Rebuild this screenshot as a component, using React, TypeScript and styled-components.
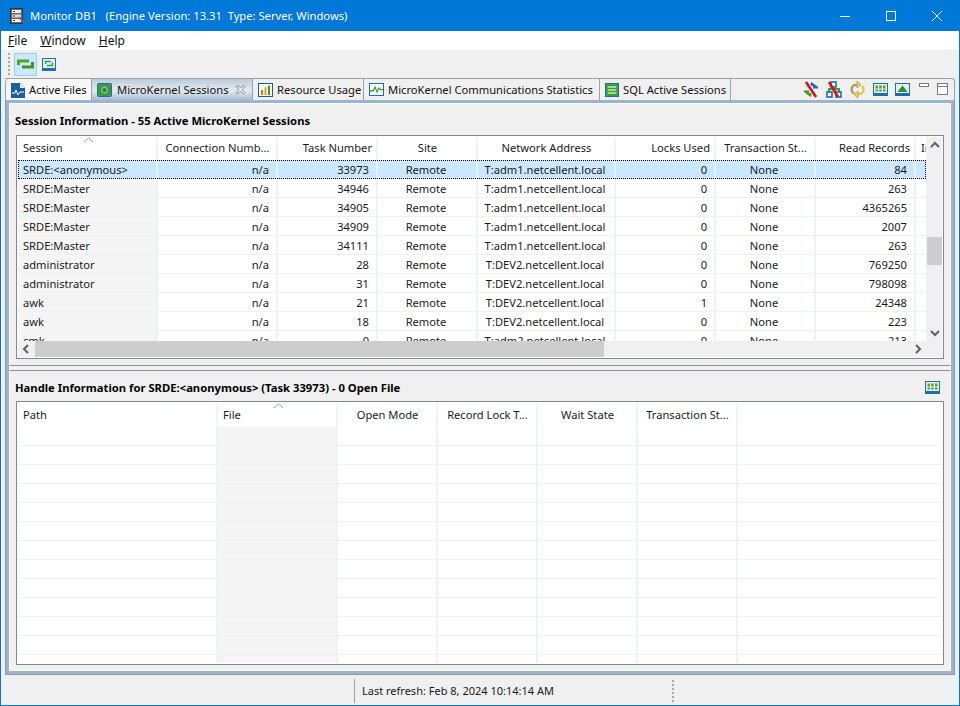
import React from "react";
import styled, { createGlobalStyle } from "styled-components";

const GlobalStyle = createGlobalStyle`
  html, body {
    margin: 0;
    padding: 0;
    background: #f0f0f0;
  }
  * {
    box-sizing: border-box;
  }
  svg {
    flex: none;
  }
`;

const Window = styled.div`
  width: 960px;
  height: 706px;
  display: flex;
  flex-direction: column;
  overflow: hidden;
  background: #f0f0f0;
  border: 1px solid #0078d7;
  border-top: none;
  font-family: "Noto Sans", "Open Sans", sans-serif;
  font-size: 11.15px;
  color: #111;
`;

const TitleBar = styled.div`
  height: 31px;
  margin: 0 -1px;
  flex: none;
  display: flex;
  align-items: center;
  padding-left: 9px;
  background: #0078d7;
  color: #fff;
  font-size: 11.2px;
`;

const TitleText = styled.span`
  margin-left: 5px;
  flex: 1;
  white-space: pre;
`;

const WindowButton = styled.div`
  width: 46px;
  height: 31px;
  display: flex;
  align-items: center;
  justify-content: center;
`;

const MenuBar = styled.div`
  height: 19px;
  flex: none;
  display: flex;
  align-items: center;
  gap: 13px;
  padding-left: 7px;
  background: #fff;
  font-size: 12px;
`;

const MenuItem = styled.span`
  &::first-letter {
    text-decoration: underline;
  }
`;

const ToolBar = styled.div`
  height: 28px;
  flex: none;
  display: flex;
  align-items: center;
  padding-left: 7px;
`;

const Grip = styled.div<{ $height: number }>`
  width: 2px;
  height: ${({ $height }) => $height}px;
  border-left: 2px dotted #a8a8a8;
`;

const ToolButton = styled.div<{ $active?: boolean }>`
  width: 23px;
  height: 23px;
  display: flex;
  align-items: center;
  justify-content: center;
  margin-left: ${({ $active }) => ($active ? "4px" : "0")};
  background: ${({ $active }) => ($active ? "#cce8ff" : "transparent")};
  border: 1px solid ${({ $active }) => ($active ? "#99d1ff" : "transparent")};
`;

const Folder = styled.div`
  width: 950px;
  height: 597px;
  flex: none;
  margin-left: 4px;
  display: flex;
  flex-direction: column;
`;

const TabStrip = styled.div`
  height: 22px;
  flex: none;
  display: flex;
  align-items: stretch;
  font-size: 11.2px;
  border-top: 1px solid #a0a0a0;
  border-right: 1px solid #a0a0a0;
  border-top-right-radius: 4px;
`;

const Tab = styled.div<{ $width: number; $state: "first" | "selected" | "normal" }>`
  width: ${({ $width }) => $width}px;
  flex: none;
  display: flex;
  align-items: center;
  gap: ${({ $state }) => ($state === "selected" ? 5 : 4)}px;
  padding-left: 5px;
  white-space: nowrap;
  border-right: 1px solid #a0a0a0;
  border-left: ${({ $state }) => ($state === "first" ? "1px solid #a0a0a0" : "none")};
  border-top-left-radius: ${({ $state }) => ($state === "first" ? "4px" : "0")};
  background: ${({ $state }) =>
    $state === "selected"
      ? "linear-gradient(#b9cbdc, #dfe6ed 45%, #dfe6ed 60%, #a6bcd2)"
      : $state === "first"
        ? "#f7f7f7"
        : "#f0f0f0"};
`;

const TabClose = styled.span`
  display: flex;
  margin-left: auto;
  margin-right: 6px;
`;

const TabTools = styled.div`
  flex: 1;
  display: flex;
  align-items: center;
  justify-content: flex-end;
  gap: 7px;
  padding-right: 6px;
`;

const ViewTools = styled.div`
  display: flex;
  align-items: center;
  gap: 7px;
  margin-left: 2px;
`;

const TabBody = styled.div`
  flex: 1;
  display: flex;
  flex-direction: column;
  border: 1px solid #8f9aa6;
  border-top: none;
  box-shadow: inset 0 0 0 3px #9cb3cc;
  padding: 3px;
`;

const Panel = styled.section<{ $height: number; $top?: boolean }>`
  height: ${({ $height }) => $height}px;
  flex: none;
  display: flex;
  flex-direction: column;
  padding: 0 6px;
  background: #f0f0f0;
  border: 1px solid #fff;
  border-top: ${({ $top }) => ($top ? "1px solid #fff" : "1px solid #8c9097")};
  border-bottom: ${({ $top }) => ($top ? "1px solid #8c9097" : "1px solid #fff")};
`;

const Sash = styled.div`
  height: 4px;
  flex: none;
  background: #f0f0f0;
`;

const PanelHead = styled.div<{ $height: number }>`
  height: ${({ $height }) => $height}px;
  flex: none;
  display: flex;
  align-items: center;
  justify-content: space-between;
  padding: 2px 4px 0 0;
`;

const PanelTitle = styled.h2`
  margin: 0 0 0 -1px;
  font-size: 11.25px;
  font-weight: 700;
  color: #000;
`;

const TableFrame = styled.div<{ $height: number }>`
  height: ${({ $height }) => $height}px;
  flex: none;
  padding: 1px;
  background: #fff;
  border: 1px solid #828790;
  display: grid;
  grid-template-columns: minmax(0, 1fr) auto;
  grid-template-rows: minmax(0, 1fr) auto;
`;

const TableView = styled.div`
  overflow: hidden;
  position: relative;
`;

const HeaderRow = styled.div<{ $cols: string; $height: number }>`
  height: ${({ $height }) => $height}px;
  display: grid;
  grid-template-columns: ${({ $cols }) => $cols};
  background: #fff;
`;

const HeaderCell = styled.div<{ $align: string }>`
  display: flex;
  align-items: center;
  padding: 0 4px 2px 5px;
  justify-content: ${({ $align }) => $align};
  white-space: nowrap;
  overflow: hidden;
  border-right: 2px solid #f0f3f8;
  color: #1a1a1a;
`;

const SortMark = styled.svg<{ $left: number }>`
  position: absolute;
  top: 0;
  left: ${({ $left }) => $left}px;
`;

const Row = styled.div<{ $cols: string; $selected?: boolean }>`
  height: 19px;
  display: grid;
  grid-template-columns: ${({ $cols }) => $cols};
  border-bottom: 1px solid #f0f0f0;
  outline: ${({ $selected }) => ($selected ? "1px dotted #000" : "none")};
  outline-offset: -1px;
  background: ${({ $selected }) => ($selected ? "#cce8ff" : "transparent")};
`;

const Cell = styled.div<{ $align: string; $sorted?: boolean; $selected?: boolean }>`
  display: flex;
  align-items: center;
  justify-content: ${({ $align }) => $align};
  padding: 1px 7px 0 5px;
  white-space: nowrap;
  overflow: hidden;
  color: #1a1a1a;
  border-right: 2px solid ${({ $selected }) => ($selected ? "#e4f2fd" : "#eef2f9")};
  background: ${({ $sorted, $selected }) =>
    $selected ? "transparent" : $sorted ? "#f5f5f5" : "transparent"};
`;

const VScroll = styled.div`
  width: 16px;
  display: flex;
  flex-direction: column;
  align-items: center;
  background: #f0f0f0;
  border-left: 1px solid #f0f0f0;
`;

const VThumb = styled.div`
  width: 15px;
  height: 28px;
  margin-top: 84px;
  background: #cdcdcd;
`;

const ScrollSpacer = styled.div`
  flex: 1;
`;

const ArrowBox = styled.div`
  width: 16px;
  height: 16px;
  flex: none;
  display: flex;
  align-items: center;
  justify-content: center;
`;

const HScroll = styled.div`
  height: 16px;
  display: flex;
  background: #f0f0f0;
`;

const HThumb = styled.div`
  width: 569px;
  margin-left: 1px;
  background: #cdcdcd;
`;

const HTrack = styled.div`
  flex: 1;
`;

const Corner = styled.div`
  width: 16px;
  height: 16px;
  background: #f0f0f0;
`;

const StatusBar = styled.div`
  flex: 1;
  display: flex;
  align-items: center;
  padding-top: 1px;
  font-size: 11px;
`;

const StatusCell = styled.div`
  width: 318px;
  height: 24px;
  margin-left: 353px;
  padding-left: 7px;
  display: flex;
  align-items: center;
  border-left: 1px solid #a0a0a0;
  white-space: nowrap;
  color: #1a1a1a;
`;

const Chevron = ({ dir }: { dir: "up" | "down" | "left" | "right" }) => {
  const points = {
    up: "1,7 5,3 9,7",
    down: "1,3 5,7 9,3",
    left: "7,1 3,5 7,9",
    right: "3,1 7,5 3,9",
  }[dir];
  return (
    <svg width="10" height="10" viewBox="0 0 10 10">
      <polyline points={points} fill="none" stroke="#606060" strokeWidth="2" />
    </svg>
  );
};

const AppIcon = () => (
  <svg width="16" height="16" viewBox="0 0 16 16">
    <rect x="1.500" y="0.500" width="12" height="15" fill="#6a6a6a" stroke="#333" />
    <rect x="3" y="2" width="9" height="3" fill="#eee" />
    <rect x="3" y="6.500" width="9" height="3" fill="#ddd" />
    <rect x="3" y="11" width="9" height="3" fill="#eee" />
    <rect x="4" y="3" width="2" height="1" fill="#333" />
    <rect x="4" y="7.500" width="2" height="1" fill="#333" />
    <rect x="4" y="12" width="2" height="1" fill="#333" />
    <path d="M10 9l5 6" stroke="#b8455a" strokeWidth="1.500" />
  </svg>
);

const SwapIcon = ({ framed }: { framed?: boolean }) =>
  framed ? (
    <svg width="14" height="13" viewBox="0 0 14 13">
      <rect x="0" y="0" width="14" height="13" fill="#1c6fa8" />
      <rect x="1" y="1" width="12" height="9" fill="#dff0f6" />
      <path d="M3.500 6V3.500H9M10.500 4.500V7.500H5" fill="none" stroke="#3f9f34" strokeWidth="1.500" />
    </svg>
  ) : (
    <svg width="17" height="10" viewBox="0 0 17 10">
      <path d="M1.500 6V2H12" fill="none" stroke="#4aa528" strokeWidth="3" />
      <path d="M15.500 3V8H5" fill="none" stroke="#3d9620" strokeWidth="3" />
    </svg>
  );

const FilesIcon = () => (
  <svg width="14" height="16" viewBox="0 0 14 16">
    <path d="M0 1h9l5 5v10H0z" fill="#1c5f9e" />
    <path d="M9 1l5 5H9z" fill="#e8eef5" />
    <polyline points="1,11 4,11 5,8 7,13 9,10 13,10" fill="none" stroke="#fff" />
  </svg>
);

const KernelIcon = () => (
  <svg width="15" height="14" viewBox="0 0 15 14">
    <rect x="0.500" y="0.500" width="14" height="13" rx="1" fill="#3f9a4a" stroke="#1c6fa0" />
    <circle cx="7.500" cy="7" r="4.500" fill="#6fc07c" stroke="#2d7e3e" />
    <circle cx="7.500" cy="7" r="2" fill="#2d7e3e" />
  </svg>
);

const UsageIcon = () => (
  <svg width="15" height="14" viewBox="0 0 15 14">
    <rect x="0.500" y="0.500" width="14" height="13" fill="#fff" stroke="#1b5e96" />
    <rect x="3" y="7" width="2" height="5" fill="#e8711c" />
    <rect x="6.500" y="4" width="2" height="8" fill="#e0a020" />
    <rect x="10" y="2.500" width="2" height="9.500" fill="#3c9a2c" />
  </svg>
);

const StatsIcon = () => (
  <svg width="15" height="13" viewBox="0 0 15 13">
    <rect x="0.500" y="0.500" width="14" height="12" fill="#fff" stroke="#1b6fa8" />
    <polyline points="1,8 4,8 6,4 8,9 10,5 12,7 14,6" fill="none" stroke="#48a03a" strokeWidth="1.300" />
  </svg>
);

const SqlIcon = () => (
  <svg width="14" height="14" viewBox="0 0 14 14">
    <rect x="0.500" y="0.500" width="13" height="13" fill="#3f9a4a" stroke="#1b6fa8" />
    <rect x="2.500" y="3" width="9" height="2" rx="1" fill="#a5dc8c" />
    <rect x="2.500" y="6" width="9" height="2" rx="1" fill="#a5dc8c" />
    <rect x="2.500" y="9" width="9" height="2" rx="1" fill="#a5dc8c" />
  </svg>
);

const CloseIcon = () => (
  <svg width="11" height="11" viewBox="0 0 11 11">
    <path
      d="M1 2.500L2.500 1 5.500 4 8.500 1 10 2.500 7 5.500 10 8.500 8.500 10 5.500 7 2.500 10 1 8.500 4 5.500z"
      fill="#fff"
      stroke="#7d8891"
    />
  </svg>
);

const LinksOffIcon = () => (
  <svg width="16" height="17" viewBox="0 0 16 17">
    <path d="M1 7.500h9V5h-2V3.500h-1L8.500 1 15 6v1.500z" fill="#1c6fb0" />
    <path d="M15 9.500H6V12h2v1.500h1L7.500 16 1 11V9.500z" fill="#3f9a2c" />
    <path d="M3 1l10 15" stroke="#d8141c" strokeWidth="2.600" />
  </svg>
);

const TreeOffIcon = () => (
  <svg width="16" height="17" viewBox="0 0 16 17">
    <path d="M3 12V8h10v4" fill="none" stroke="#3f9a2c" strokeWidth="2" />
    <rect x="5" y="1" width="5" height="5" fill="#fff" stroke="#1c6fb0" strokeWidth="1.600" />
    <rect x="1" y="11" width="5" height="5" fill="#fff" stroke="#1c6fb0" strokeWidth="1.600" />
    <rect x="10" y="11" width="5" height="5" fill="#fff" stroke="#1c6fb0" strokeWidth="1.600" />
    <path d="M3 1l9 15" stroke="#d8141c" strokeWidth="2.600" />
  </svg>
);

const RefreshIcon = () => (
  <svg width="17" height="17" viewBox="0 0 17 17">
    <path d="M8 4a4.500 4.500 0 0 0-5.500 4.500c0 2 1 3 2.500 4" fill="none" stroke="#a89a70" strokeWidth="2.400" />
    <path d="M9 13a4.500 4.500 0 0 0 5.500-4.500c0-1.500-.6-2.800-1.500-3.700" fill="none" stroke="#e2c94a" strokeWidth="2.400" />
    <path d="M8 0v7l4-3.500z" fill="#f0d848" stroke="#9a8430" strokeWidth="0.600" />
    <path d="M9 17v-7l-4 3.500z" fill="#f0d848" stroke="#9a8430" strokeWidth="0.600" />
  </svg>
);

const ColumnsIcon = () => (
  <svg width="15" height="13" viewBox="0 0 15 13">
    <rect x="0" y="0" width="15" height="13" fill="#1c6fa8" />
    <rect x="1" y="1" width="13" height="9" fill="#e6f0f6" />
    <rect x="2.500" y="2.500" width="2.500" height="3" fill="#5aa02c" />
    <rect x="6.200" y="2.500" width="2.500" height="3" fill="#5aa02c" />
    <rect x="10" y="2.500" width="2.500" height="3" fill="#5aa02c" />
    <rect x="2.500" y="6.500" width="2.500" height="2" fill="#5aa02c" />
    <rect x="6.200" y="6.500" width="2.500" height="2" fill="#5aa02c" />
    <rect x="10" y="6.500" width="2.500" height="2" fill="#5aa02c" />
  </svg>
);

const PictureIcon = () => (
  <svg width="15" height="13" viewBox="0 0 15 13">
    <rect x="0" y="0" width="15" height="13" fill="#1c6fa8" />
    <rect x="1" y="1" width="13" height="9" fill="#e6f0f6" />
    <path d="M7.500 2.500L12.500 9h-10z" fill="#2f8f1c" />
  </svg>
);

const MinimizeView = () => (
  <svg width="11" height="16" viewBox="0 0 11 16">
    <rect x="0.500" y="1.500" width="9" height="3" fill="#fff" stroke="#7a7a7a" />
  </svg>
);

const MaximizeView = () => (
  <svg width="11" height="16" viewBox="0 0 11 16">
    <rect x="0.500" y="1.500" width="10" height="11" fill="#fff" stroke="#7a7a7a" />
    <path d="M0.500 4.500h10" stroke="#7a7a7a" />
  </svg>
);

const Sort = ({ left }: { left: number }) => (
  <SortMark $left={left} width="11" height="6" viewBox="0 0 11 6">
    <polyline points="1,5 5.500,1 10,5" fill="none" stroke="#a0a0a0" />
  </SortMark>
);

type Column = { title: string; width: number; align: string; headAlign?: string };

const sessionColumns: Column[] = [
  { title: "Session", width: 140, align: "flex-start", headAlign: "flex-start" },
  { title: "Connection Numb...", width: 120, align: "flex-end" },
  { title: "Task Number", width: 100, align: "flex-end", headAlign: "flex-end" },
  { title: "Site", width: 100, align: "center" },
  { title: "Network Address", width: 138, align: "center" },
  { title: "Locks Used", width: 100, align: "flex-end", headAlign: "flex-end" },
  { title: "Transaction St...", width: 100, align: "center" },
  { title: "Read Records", width: 100, align: "flex-end", headAlign: "flex-end" },
  { title: "Inserted Records", width: 100, align: "flex-end", headAlign: "flex-start" },
];

const sessions = [
  ["SRDE:<anonymous>", "n/a", "33973", "Remote", "T:adm1.netcellent.local", "0", "None", "84", ""],
  ["SRDE:Master", "n/a", "34946", "Remote", "T:adm1.netcellent.local", "0", "None", "263", ""],
  ["SRDE:Master", "n/a", "34905", "Remote", "T:adm1.netcellent.local", "0", "None", "4365265", ""],
  ["SRDE:Master", "n/a", "34909", "Remote", "T:adm1.netcellent.local", "0", "None", "2007", ""],
  ["SRDE:Master", "n/a", "34111", "Remote", "T:adm1.netcellent.local", "0", "None", "263", ""],
  ["administrator", "n/a", "28", "Remote", "T:DEV2.netcellent.local", "0", "None", "769250", ""],
  ["administrator", "n/a", "31", "Remote", "T:DEV2.netcellent.local", "0", "None", "798098", ""],
  ["awk", "n/a", "21", "Remote", "T:DEV2.netcellent.local", "1", "None", "24348", ""],
  ["awk", "n/a", "18", "Remote", "T:DEV2.netcellent.local", "0", "None", "223", ""],
  ["cmk", "n/a", "0", "Remote", "T:adm2.netcellent.local", "0", "None", "213", ""],
];

const handleColumns: Column[] = [
  { title: "Path", width: 200, align: "flex-start", headAlign: "flex-start" },
  { title: "File", width: 120, align: "flex-start", headAlign: "flex-start" },
  { title: "Open Mode", width: 100, align: "center" },
  { title: "Record Lock T...", width: 100, align: "center" },
  { title: "Wait State", width: 100, align: "center" },
  { title: "Transaction St...", width: 100, align: "center" },
  { title: "", width: 206, align: "center" },
];

const colTemplate = (columns: Column[]) => columns.map((c) => `${c.width}px`).join(" ");

const tabs = [
  { label: "Active Files", width: 87, state: "first", icon: <FilesIcon /> },
  { label: "MicroKernel Sessions", width: 161, state: "selected", icon: <KernelIcon /> },
  { label: "Resource Usage", width: 111, state: "normal", icon: <UsageIcon /> },
  { label: "MicroKernel Communications Statistics", width: 236, state: "normal", icon: <StatsIcon /> },
  { label: "SQL Active Sessions", width: 131, state: "normal", icon: <SqlIcon /> },
] as const;

export default function App() {
  const sessionCols = colTemplate(sessionColumns);
  const handleCols = colTemplate(handleColumns);

  return (
    <Window>
      <GlobalStyle />
      <TitleBar>
        <AppIcon />
        <TitleText>Monitor DB1   (Engine Version: 13.31  Type: Server, Windows)</TitleText>
        <WindowButton>
          <svg width="10" height="10" viewBox="0 0 10 10">
            <path d="M0 5.500h10" stroke="#fff" />
          </svg>
        </WindowButton>
        <WindowButton>
          <svg width="10" height="10" viewBox="0 0 10 10">
            <rect x="0.500" y="0.500" width="9" height="9" fill="none" stroke="#fff" />
          </svg>
        </WindowButton>
        <WindowButton>
          <svg width="10" height="10" viewBox="0 0 10 10">
            <path d="M0 0l10 10M10 0L0 10" stroke="#fff" />
          </svg>
        </WindowButton>
      </TitleBar>

      <MenuBar>
        <MenuItem>File</MenuItem>
        <MenuItem>Window</MenuItem>
        <MenuItem>Help</MenuItem>
      </MenuBar>

      <ToolBar>
        <Grip $height={22} />
        <ToolButton $active>
          <SwapIcon />
        </ToolButton>
        <ToolButton>
          <SwapIcon framed />
        </ToolButton>
      </ToolBar>

      <Folder>
        <TabStrip>
          {tabs.map((tab) => (
            <Tab key={tab.label} $width={tab.width} $state={tab.state}>
              {tab.icon}
              {tab.label}
              {tab.state === "selected" && (
                <TabClose>
                  <CloseIcon />
                </TabClose>
              )}
            </Tab>
          ))}
          <TabTools>
            <LinksOffIcon />
            <TreeOffIcon />
            <RefreshIcon />
            <ColumnsIcon />
            <PictureIcon />
            <ViewTools>
              <MinimizeView />
              <MaximizeView />
            </ViewTools>
          </TabTools>
        </TabStrip>

        <TabBody>
          <Panel $height={263} $top>
            <PanelHead $height={31}>
              <PanelTitle>Session Information - 55 Active MicroKernel Sessions</PanelTitle>
            </PanelHead>
            <TableFrame $height={224}>
              <TableView>
                <HeaderRow $cols={sessionCols} $height={23}>
                  {sessionColumns.map((col) => (
                    <HeaderCell key={col.title} $align={col.headAlign ?? "center"}>
                      {col.title}
                    </HeaderCell>
                  ))}
                </HeaderRow>
                <Sort left={65} />
                {sessions.map((row, i) => (
                  <Row key={i} $cols={sessionCols} $selected={i === 0}>
                    {row.map((value, j) => (
                      <Cell
                        key={j}
                        $align={sessionColumns[j].align}
                        $sorted={j === 0}
                        $selected={i === 0}
                      >
                        {value}
                      </Cell>
                    ))}
                  </Row>
                ))}
              </TableView>
              <VScroll>
                <ArrowBox>
                  <Chevron dir="up" />
                </ArrowBox>
                <VThumb />
                <ScrollSpacer />
                <ArrowBox>
                  <Chevron dir="down" />
                </ArrowBox>
              </VScroll>
              <HScroll>
                <ArrowBox>
                  <Chevron dir="left" />
                </ArrowBox>
                <HThumb />
                <HTrack />
                <ArrowBox>
                  <Chevron dir="right" />
                </ArrowBox>
              </HScroll>
              <Corner />
            </TableFrame>
          </Panel>

          <Sash />

          <Panel $height={301}>
            <PanelHead $height={30}>
              <PanelTitle>Handle Information for SRDE:&lt;anonymous&gt; (Task 33973) - 0 Open File</PanelTitle>
              <ColumnsIcon />
            </PanelHead>
            <TableFrame $height={264}>
              <TableView>
                <HeaderRow $cols={handleCols} $height={24}>
                  {handleColumns.map((col) => (
                    <HeaderCell key={col.title} $align={col.headAlign ?? "center"}>
                      {col.title}
                    </HeaderCell>
                  ))}
                </HeaderRow>
                <Sort left={255} />
                {Array.from({ length: 13 }, (_, i) => (
                  <Row key={i} $cols={handleCols}>
                    {handleColumns.map((col, j) => (
                      <Cell key={col.title} $align={col.align} $sorted={j === 1} />
                    ))}
                  </Row>
                ))}
              </TableView>
            </TableFrame>
          </Panel>
        </TabBody>
      </Folder>

      <StatusBar>
        <StatusCell>Last refresh: Feb 8, 2024 10:14:14 AM</StatusCell>
        <Grip $height={22} />
      </StatusBar>
    </Window>
  );
}
